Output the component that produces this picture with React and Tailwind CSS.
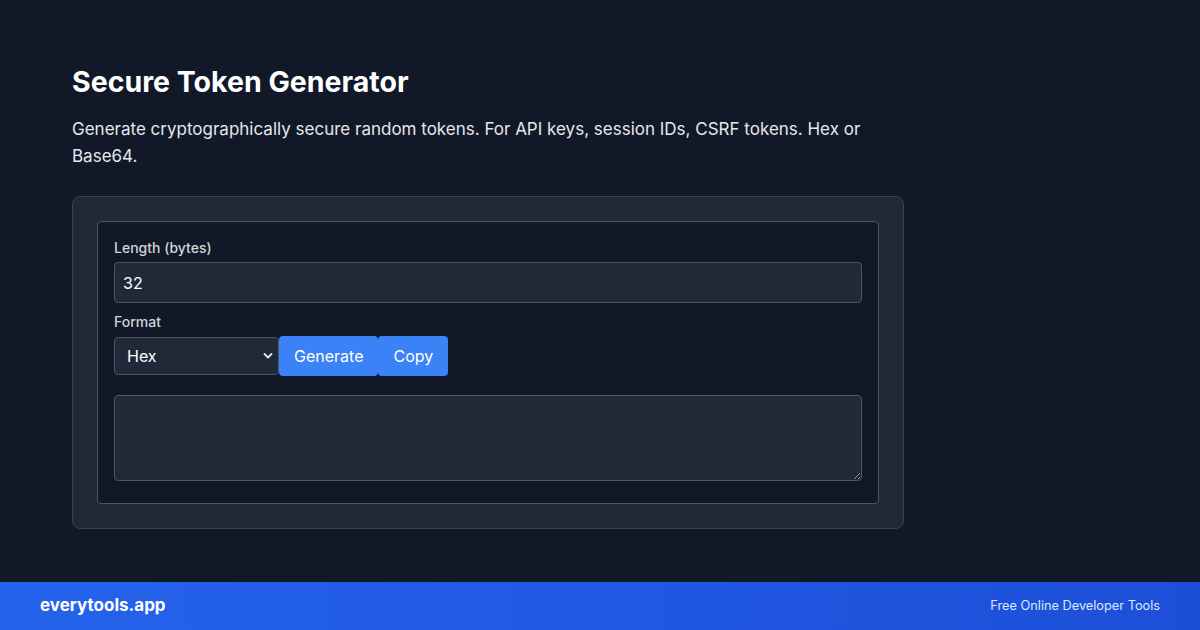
import React, { useState } from "react";

function App() {
  const [length, setLength] = useState("32");
  const [format, setFormat] = useState("hex");
  const [token, setToken] = useState("");

  return (
    <div
      className="min-h-screen flex flex-col bg-[#111827] text-white"
      style={{ fontFamily: "Inter, 'Noto Sans', sans-serif" }}
    >
      {/* Main */}
      <main className="flex-1 px-[72px] pt-16">
        <div className="w-[832px]">
          <h1 className="text-[28.5px] leading-9 font-bold text-white mb-4">
            Secure Token Generator
          </h1>
          <p className="max-w-[800px] text-[17px] leading-[27px] text-[#e5e7eb] mb-[26px]">
            Generate cryptographically secure random tokens. For API keys,
            session IDs, CSRF tokens. Hex or Base64.
          </p>

          {/* Card */}
          <div className="bg-[#1f2937] border border-[#374151] rounded-lg p-6">
            <div className="bg-[#111827] border border-[#4b5563] rounded p-4 pb-[22px]">
              <label className="block text-sm font-medium text-[#d1d5db] leading-5 mb-1">
                Length (bytes)
              </label>
              <input
                type="number"
                value={length}
                onChange={(e) => setLength(e.target.value)}
                className="block w-full h-[41px] px-2 bg-[#1f2937] border border-[#4b5563] rounded text-base text-white outline-none"
              />

              <label className="block text-sm font-medium text-[#d1d5db] leading-5 mt-[9px] mb-1">
                Format
              </label>
              <div className="flex items-center">
                <div className="relative w-[165px]">
                  <select
                    value={format}
                    onChange={(e) => setFormat(e.target.value)}
                    className="appearance-none block w-full h-[38px] pl-3 pr-8 bg-[#1f2937] border border-[#4b5563] rounded text-base text-white outline-none"
                  >
                    <option value="hex">Hex</option>
                    <option value="base64">Base64</option>
                  </select>
                  <svg
                    className="absolute right-[6px] top-[15px] pointer-events-none"
                    width="10"
                    height="8"
                    viewBox="0 0 10 8"
                    fill="none"
                  >
                    <path
                      d="M1.5 2l3.5 3.5L8.5 2"
                      stroke="#e5e7eb"
                      strokeWidth="1.8"
                      strokeLinecap="round"
                      strokeLinejoin="round"
                    />
                  </svg>
                </div>
                <button
                  onClick={() => setToken("")}
                  className="h-10 px-[15px] bg-[#3b82f6] text-white text-base rounded"
                >
                  Generate
                </button>
                <button className="h-10 px-[15px] bg-[#3b82f6] text-white text-base rounded">
                  Copy
                </button>
              </div>

              <textarea
                value={token}
                onChange={(e) => setToken(e.target.value)}
                className="block w-full h-[86px] mt-[19px] bg-[#1f2937] border border-[#4b5563] rounded text-white outline-none p-2"
              />
            </div>
          </div>
        </div>
      </main>

      {/* Footer */}
      <footer className="h-12 px-10 flex items-center justify-between bg-linear-to-r from-[#2563eb] to-[#1d4ed8]">
        <span className="text-[17px] font-bold text-white">everytools.app</span>
        <span className="text-[12.75px] text-[#dbeafe]">
          Free Online Developer Tools
        </span>
      </footer>
    </div>
  );
}

export default App;
